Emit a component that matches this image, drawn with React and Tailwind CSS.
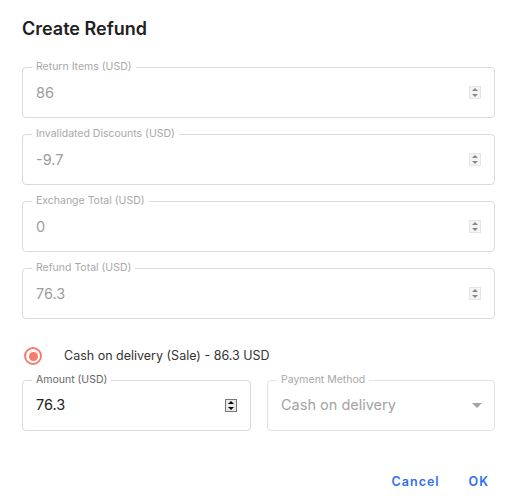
import React from 'react';

const Spinner = ({ dark }) => (
  <div className={`flex flex-col w-[12px] h-[13px] border ${dark ? 'border-[#767676] bg-[#e9e9e9]' : 'border-[#e5e5e5] bg-[#f4f4f4]'}`}>
    <div className="flex-1 flex items-center justify-center">
      <div className={`w-0 h-0 border-l-[3px] border-r-[3px] border-b-[3px] border-l-transparent border-r-transparent ${dark ? 'border-b-black' : 'border-b-[#888]'}`} />
    </div>
    <div className="flex-1 flex items-center justify-center">
      <div className={`w-0 h-0 border-l-[3px] border-r-[3px] border-t-[3px] border-l-transparent border-r-transparent ${dark ? 'border-t-black' : 'border-t-[#888]'}`} />
    </div>
  </div>
);

const Field = ({ label, value, active, className = '', right, valueClass }) => (
  <div className={`relative h-[51px] rounded border border-[#d9d9d9] px-[13px] flex items-center ${className}`}>
    <span className={`absolute left-[9px] top-[-7px] bg-white px-[4px] text-[10.5px] leading-[12px] ${active ? 'text-[#666]' : 'text-[#a8a8a8]'}`}>{label}</span>
    <span className={`flex-1 text-[14.5px] ${valueClass || (active ? 'text-[#222]' : 'text-[#9e9e9e]')}`}>{value}</span>
    {right}
  </div>
);

export default function App() {
  const fields = [
    ['Return Items (USD)', '86'],
    ['Invalidated Discounts (USD)', '-9.7'],
    ['Exchange Total (USD)', '0'],
    ['Refund Total (USD)', '76.3'],
  ];
  return (
    <div className="w-[516px] h-[500px] bg-white px-[22px] pt-[17px]" style={{ fontFamily: 'Inter, "Noto Sans", sans-serif' }}>
      <h1 className="text-[18px] font-semibold text-[#212121] leading-[24px] mb-[26px]">Create Refund</h1>
      <div className="flex flex-col gap-[16px] mr-[-1px]">
        {fields.map(([l, v]) => (
          <Field key={l} label={l} value={v} right={<Spinner />} />
        ))}
      </div>
      <div className="flex items-center mt-[28px] ml-[2px]">
        <div className="w-[18px] h-[18px] rounded-full border-2 border-[#f77c6e] flex items-center justify-center">
          <div className="w-[9px] h-[9px] rounded-full bg-[#f77c6e]" />
        </div>
        <span className="ml-[22px] text-[12.5px] text-[#333]">Cash on delivery (Sale) - 86.3 USD</span>
      </div>
      <div className="flex gap-[16px] mt-[14px] mr-[-1px]">
        <Field className="w-[229px]" label="Amount (USD)" value="76.3" active right={<Spinner dark />} />
        <Field className="flex-1 border-[#e2e2e2]" label="Payment Method" value="Cash on delivery" valueClass="text-[#a3a3a3]"
          right={<div className="mr-[-1px] w-0 h-0 border-l-[5px] border-r-[5px] border-t-[5px] border-l-transparent border-r-transparent border-t-[#a3a3a3]" />} />
      </div>
      <div className="flex justify-end gap-[29px] mt-[42px] mr-[5px] text-[12.5px] font-semibold tracking-[0.08em] text-[#2f6df6]">
        <span>Cancel</span>
        <span>OK</span>
      </div>
    </div>
  );
}
